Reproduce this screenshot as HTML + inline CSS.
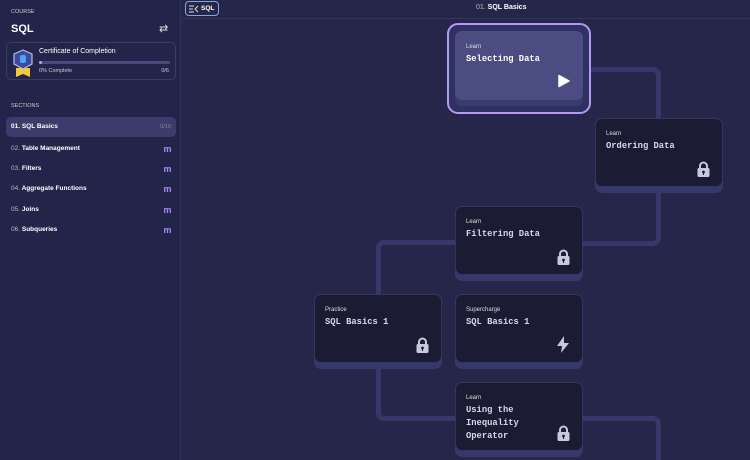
<!DOCTYPE html>
<html><head><style>
*{box-sizing:border-box;margin:0;padding:0}
html,body{width:750px;height:460px;overflow:hidden}
body{background:#25264a;font-family:"Liberation Sans",sans-serif;color:#fff;position:relative}
.side{position:absolute;left:0;top:0;width:181px;height:460px;background:#23244a;border-right:1px solid #32335a}
.top{position:absolute;left:182px;top:0;width:568px;height:19px;border-bottom:1px solid #33345c}
.abs{position:absolute}
.row{position:absolute;left:6px;width:170px;height:20px;font-size:6.5px;line-height:20px;padding-left:5px;color:#fff;font-weight:bold}
.row span{color:#bbb;font-weight:normal}
.m{position:absolute;right:5px;top:0;color:#a98bf5 !important;font-weight:bold !important;font-size:9px;letter-spacing:-0.5px}
.card{position:absolute;width:128px;height:75px;border-radius:7px;background:#36376a}
.card .in{position:absolute;left:0;top:0;width:128px;height:69px;border-radius:7px;background:#1b1b33;border:1px solid #34355f;padding:12px 0 0 10px}
.lab{font-size:6px;color:#ddd}
.tt{font-family:"Liberation Mono",monospace;font-weight:bold;font-size:8.8px;color:#d8d8e8;margin-top:3px;line-height:12.8px}
.ico{position:absolute;right:12px;bottom:9px}
.ln{position:absolute;border-color:#37386a;border-style:solid;border-width:0}
</style></head><body>
<div class="side">
 <div class="abs" style="left:11px;top:9px;font-size:5.5px;color:#ccc">COURSE</div>
 <div class="abs" style="left:11px;top:23px;font-size:11px;font-weight:bold">SQL</div>
 <div class="abs" style="left:159px;top:22px;font-size:11px;color:#ddd">⇄</div>
 <div class="abs" style="left:6px;top:42px;width:170px;height:38px;border:1px solid #393a66;border-radius:5px">
  <svg class="abs" style="left:5px;top:5px" width="22" height="30" viewBox="0 0 22 30"><path d="M4 20v9l7-3 7 3v-9z" fill="#f5c73c"/><path d="M11 2l9 4v10l-9 5-9-5V6z" fill="#3b4a9a" stroke="#b6bde8" stroke-width="1.2"/><rect x="8" y="7" width="6" height="8" rx="2" fill="#4fa3f5"/></svg>
  <div class="abs" style="left:32px;top:5px;font-size:7px">Certificate of Completion</div>
  <div class="abs" style="left:32px;top:18px;width:131px;height:3px;border-radius:2px;background:#4a4b7c"><div style="width:3px;height:3px;border-radius:2px;background:#b79cff"></div></div>
  <div class="abs" style="left:32px;top:25px;font-size:5.5px;color:#ccc">0% Complete</div>
  <div class="abs" style="right:6px;top:25px;font-size:5.5px;color:#ccc">0/6</div>
 </div>
 <div class="abs" style="left:11px;top:103px;font-size:5.5px;color:#ccc">SECTIONS</div>
 <div class="row" style="top:117px;background:#3b3c6c;border-radius:5px">01. SQL Basics<span class="abs" style="right:5px;color:#888;font-size:5.5px">0/10</span></div>
 <div class="row" style="top:139px"><span>02.</span> Table Management<span class="m">m</span></div>
 <div class="row" style="top:159px"><span>03.</span> Filters<span class="m">m</span></div>
 <div class="row" style="top:179px"><span>04.</span> Aggregate Functions<span class="m">m</span></div>
 <div class="row" style="top:200px"><span>05.</span> Joins<span class="m">m</span></div>
 <div class="row" style="top:220px"><span>06.</span> Subqueries<span class="m">m</span></div>
</div>
<div class="top">
 <div class="abs" style="left:3px;top:1px;width:34px;height:15px;border:1px solid #8aa6d6;border-radius:4px;font-size:6.5px;font-weight:bold;line-height:13px;padding-left:15px">SQL
  <svg class="abs" style="left:3px;top:3px" width="10" height="8" viewBox="0 0 10 8"><path d="M0 1h5M0 4h4M0 7h5M9 1L6 4l3 3" stroke="#ddd" fill="none" stroke-width="1"/></svg></div>
 <div class="abs" style="left:294px;top:4px;font-size:7px;font-weight:bold"><span style="color:#bbb;font-weight:normal">01.</span> SQL Basics</div>
</div>
<div class="ln" style="left:580px;top:67px;width:81px;height:55px;border-top-width:5px;border-right-width:5px;border-top-right-radius:8px"></div>
<div class="ln" style="left:580px;top:190px;width:81px;height:56px;border-bottom-width:5px;border-right-width:5px;border-bottom-right-radius:8px"></div>
<div class="ln" style="left:376px;top:240px;width:82px;height:58px;border-top-width:5px;border-left-width:5px;border-top-left-radius:8px"></div>
<div class="ln" style="left:376px;top:366px;width:82px;height:55px;border-bottom-width:5px;border-left-width:5px;border-bottom-left-radius:8px"></div>
<div class="ln" style="left:580px;top:416px;width:81px;height:50px;border-top-width:5px;border-right-width:5px;border-top-right-radius:8px"></div>
<div class="abs" style="left:447px;top:23px;width:144px;height:91px;border:2px solid #b39af0;border-radius:11px;background:#303163"></div>
<div class="card" style="left:455px;top:31px;background:#3a3b6e"><div class="in" style="background:#4b4c82;border-color:#4b4c82">
 <div class="lab">Learn</div><div class="tt" style="color:#fff">Selecting Data</div>
 <svg class="ico" style="right:12px;bottom:11px" width="12" height="14" viewBox="0 0 12 14"><path d="M1 1.5L11 7 1 12.5z" fill="#fff" stroke="#fff" stroke-linejoin="round" stroke-width="1.5"/></svg></div></div>
<div class="card" style="left:595px;top:118px"><div class="in"><div class="lab">Learn</div><div class="tt">Ordering Data</div>
 <svg class="ico" width="13" height="16" viewBox="0 0 13 16"><path d="M3 7V5a3.5 3.5 0 017 0v2" stroke="#c8c8dc" stroke-width="2" fill="none"/><rect x="0.5" y="7" width="12" height="9" rx="1.5" fill="#c8c8dc"/><circle cx="6.5" cy="11" r="1.4" fill="#1b1b33"/><rect x="6" y="11" width="1" height="3" fill="#1b1b33"/></svg></div></div>
<div class="card" style="left:455px;top:206px"><div class="in"><div class="lab">Learn</div><div class="tt">Filtering Data</div>
 <svg class="ico" width="13" height="16" viewBox="0 0 13 16"><path d="M3 7V5a3.5 3.5 0 017 0v2" stroke="#c8c8dc" stroke-width="2" fill="none"/><rect x="0.5" y="7" width="12" height="9" rx="1.5" fill="#c8c8dc"/><circle cx="6.5" cy="11" r="1.4" fill="#1b1b33"/><rect x="6" y="11" width="1" height="3" fill="#1b1b33"/></svg></div></div>
<div class="card" style="left:314px;top:294px"><div class="in"><div class="lab">Practice</div><div class="tt">SQL Basics 1</div>
 <svg class="ico" width="13" height="16" viewBox="0 0 13 16"><path d="M3 7V5a3.5 3.5 0 017 0v2" stroke="#c8c8dc" stroke-width="2" fill="none"/><rect x="0.5" y="7" width="12" height="9" rx="1.5" fill="#c8c8dc"/><circle cx="6.5" cy="11" r="1.4" fill="#1b1b33"/><rect x="6" y="11" width="1" height="3" fill="#1b1b33"/></svg></div></div>
<div class="card" style="left:455px;top:294px"><div class="in"><div class="lab">Supercharge</div><div class="tt">SQL Basics 1</div>
 <svg class="ico" width="14" height="17" viewBox="0 0 14 17"><path d="M8 0L1 10h5l-1 7 8-10H8z" fill="#c8c8dc"/></svg></div></div>
<div class="card" style="left:455px;top:382px"><div class="in"><div class="lab">Learn</div><div class="tt">Using the<br>Inequality<br>Operator</div>
 <svg class="ico" width="13" height="16" viewBox="0 0 13 16"><path d="M3 7V5a3.5 3.5 0 017 0v2" stroke="#c8c8dc" stroke-width="2" fill="none"/><rect x="0.5" y="7" width="12" height="9" rx="1.5" fill="#c8c8dc"/><circle cx="6.5" cy="11" r="1.4" fill="#1b1b33"/><rect x="6" y="11" width="1" height="3" fill="#1b1b33"/></svg></div></div>
</body></html>
